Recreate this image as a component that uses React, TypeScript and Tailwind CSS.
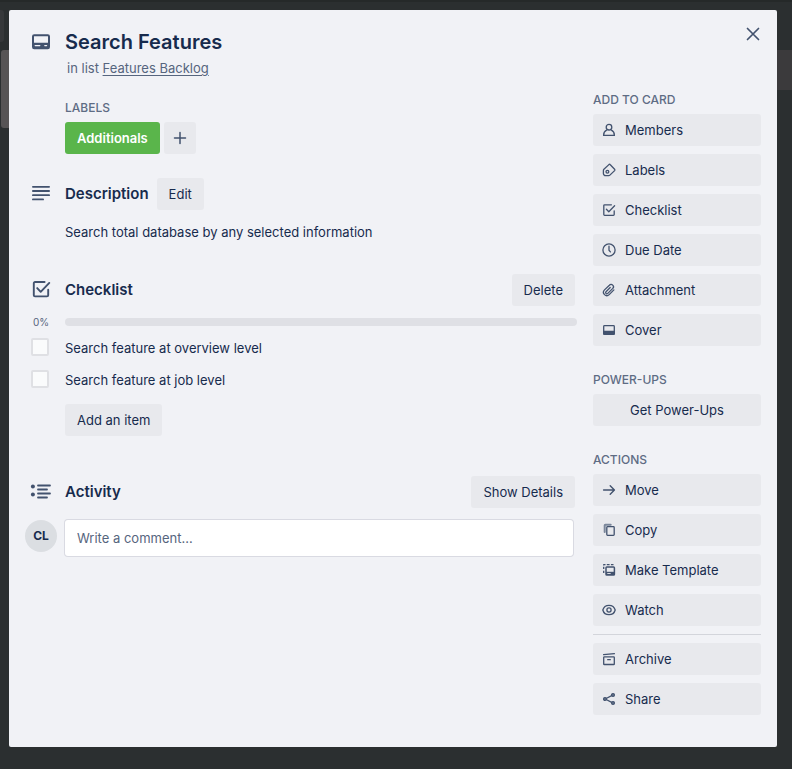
import type { ReactNode } from 'react';

function Icon({ children, small = false }: { children: ReactNode; small?: boolean }) {
  return (
    <svg
      viewBox={small ? '0 0 16 16' : '0 0 24 24'}
      className={small ? 'size-4 shrink-0 text-[#42526e]' : 'size-6 shrink-0 text-[#42526e]'}
      fill="none"
      stroke="currentColor"
      strokeWidth={small ? 1.3 : 2}
      strokeLinecap="round"
      strokeLinejoin="round"
      aria-hidden="true"
    >
      {children}
    </svg>
  );
}

const icons = {
  card: (
    <Icon>
      <rect x="4" y="5.2" width="16" height="13" rx="1.2" strokeWidth="2" />
      <path d="M4 12.700h16v5.300a1 1 0 0 1-1 1H5a1 1 0 0 1-1-1z" fill="currentColor" stroke="none" />
      <path d="M6.200 15.600h4.600M15.800 15.600h1.800" stroke="#f1f2f6" strokeWidth="1.300" />
    </Icon>
  ),
  description: (
    <Icon>
      <path d="M3.900 4.800h16.200M3.900 9h16.200M3.900 13.200h16.200M3.900 17.400h10.200" strokeWidth="1.800" />
    </Icon>
  ),
  checklist: (
    <Icon>
      <path d="M15.600 4H6a1.200 1.200 0 0 0-1.200 1.200v12a1.200 1.200 0 0 0 1.200 1.200h12a1.200 1.200 0 0 0 1.200-1.200v-5.400" strokeWidth="1.900" />
      <path d="m8.200 10.100 3.500 3.700 8.600-8.900" strokeWidth="1.900" />
    </Icon>
  ),
  activity: (
    <Icon>
      <circle cx="3.900" cy="6.500" r="2" fill="currentColor" stroke="none" />
      <circle cx="3.900" cy="14.500" r="2" fill="currentColor" stroke="none" />
      <path d="M9 5.500h12M9 9.500h9M9 13.500h12M9 17.500h9" strokeWidth="1.800" />
    </Icon>
  ),
  member: (
    <Icon small>
      <circle cx="8" cy="5.200" r="2.800" />
      <path d="M5.600 8.200C3.500 9.200 2.600 11 2.600 13.400h10.800c0-2.400-.9-4.200-3-5.200" />
    </Icon>
  ),
  label: (
    <Icon small>
      <path d="M7.900 2.600 2.900 7.300a1.700 1.700 0 0 0-.5 1.200v2.900a2.200 2.200 0 0 0 2.200 2.200h3.100c.5 0 .9-.2 1.200-.5l4.700-4.500a1 1 0 0 0 0-1.400L9.300 2.700a1 1 0 0 0-1.400-.1z" />
      <circle cx="6.400" cy="9.700" r="1.400" />
    </Icon>
  ),
  check: (
    <Icon small>
      <path d="M10.400 2.800H3.600a.8.8 0 0 0-.8.8v8.900c0 .4.4.8.8.8h8.800c.4 0 .8-.4.8-.8V8.800" />
      <path d="m5.400 7.200 2.400 2.500 5.800-6" />
    </Icon>
  ),
  clock: (
    <Icon small>
      <circle cx="8" cy="8" r="6.100" />
      <path d="M8 4.200v4.100l1.400 1.600" />
    </Icon>
  ),
  clip: (
    <Icon small>
      <path d="m12.900 7.900-4.700 4.700a3.300 3.300 0 0 1-4.700-4.700l4.900-4.700a2.300 2.300 0 0 1 3.400 3.200l-5 5a1.200 1.200 0 0 1-1.800-1.700l4.200-4.200" />
    </Icon>
  ),
  cover: (
    <Icon small>
      <rect x="2.700" y="3.700" width="10.600" height="8.600" rx="0.800" />
      <path d="M2.700 9.300h10.600v2.800H2.700z" fill="currentColor" />
    </Icon>
  ),
  move: (
    <Icon small>
      <path d="M2.600 8h10.600M9.200 3.800 13.400 8l-4.200 4.200" strokeWidth="1.400" />
    </Icon>
  ),
  copy: (
    <Icon small>
      <path d="M3.700 10V3.300c0-.3.300-.6.600-.6h5.400" strokeWidth="2" stroke="#7a869a" />
      <rect x="5.800" y="4.600" width="7.400" height="8.800" rx="0.800" fill="#e8e9ed" />
    </Icon>
  ),
  template: (
    <Icon small>
      <path d="M2.700 10.900V8.800M2.700 7V4.800M2.700 3.400v-.7h1.800M5.800 2.700h2.800M9.900 2.700h2.600" strokeLinecap="butt" />
      <rect x="5" y="5" width="8.400" height="8" rx="0.800" strokeWidth="1.500" />
      <path d="M5 9.800h8.400V13H5z" fill="currentColor" stroke="none" />
      <path d="M6.700 11.500h2.600" stroke="#e8e9ed" strokeWidth="0.900" />
    </Icon>
  ),
  watch: (
    <Icon small>
      <path d="M1.800 8c.8-2.900 3.300-4.700 6.200-4.700S13.400 5.100 14.200 8c-.8 2.900-3.300 4.700-6.200 4.700S2.600 10.900 1.800 8z" />
      <circle cx="8" cy="8" r="2.100" />
    </Icon>
  ),
  archive: (
    <Icon small>
      <path d="M2.600 3.700 13.400 2.700" />
      <rect x="2.700" y="5.900" width="10.600" height="7.600" rx="0.600" />
      <path d="M6.700 8.700h2.600" />
    </Icon>
  ),
  share: (
    <Icon small>
      <path d="M11.600 4.200 4.200 8l7.400 3.800" />
      <circle cx="12" cy="4" r="1.400" fill="#7a869a" />
      <circle cx="4" cy="8" r="1.400" fill="#7a869a" />
      <circle cx="12" cy="12" r="1.400" fill="#7a869a" />
    </Icon>
  ),
};

function Button({ children }: { children: ReactNode }) {
  return (
    <button type="button" className="h-8 rounded-[3px] bg-[#e8e9ed] px-3 text-[13px] leading-5">
      {children}
    </button>
  );
}

function SideButton({ icon, label }: { icon: ReactNode; label: string }) {
  return (
    <button type="button" className="flex h-8 w-full items-center gap-2 rounded-[3px] bg-[#e8e9ed] px-2 text-[13px] leading-5">
      {icon}
      {label}
    </button>
  );
}

function SideHeading({ children }: { children: ReactNode }) {
  return <h3 className="mb-1 text-xs leading-5 font-medium text-[#5e6c84] uppercase">{children}</h3>;
}

/* A section title row: icon in the gutter, title, then optional controls. */
function SectionHeader({ icon, title, children }: { icon: ReactNode; title: string; children?: ReactNode }) {
  return (
    <div className="flex h-8 items-center gap-3 pl-1">
      {icon}
      <div className="flex flex-1 items-center">
        <h2 className="text-[15px] leading-5 font-semibold">{title}</h2>
        {children}
      </div>
    </div>
  );
}

const checklistItems = ['Search feature at overview level', 'Search feature at job level'];

export default function App() {
  return (
    <div className="relative isolate min-h-screen bg-[#2b2f30] pt-[10px] pr-[15px] pb-[22px] pl-[9px] font-['Inter','Liberation_Sans',sans-serif] text-[#172b4d]">
      <div className="absolute inset-x-0 top-0 -z-10 h-0.5 bg-[#252929]" />
      <div className="absolute top-[10px] left-0 -z-10 h-8 w-1 rounded-r-[3px] bg-[#36383a]" />
      <div className="absolute top-[50px] left-px -z-10 h-[78px] w-6 rounded-[3px] bg-[#575455]" />
      <div className="absolute top-[50px] right-0 -z-10 h-10 w-6 bg-[#3b3a3c]" />

      <div role="dialog" aria-label="Search Features" className="rounded-xs bg-[#f1f2f6] px-4 pb-8">
        <header className="flex gap-3 pl-1">
          <div className="flex h-16 items-center">{icons.card}</div>
          <div className="flex-1 pt-5">
            <h1 className="text-xl leading-6 font-semibold">Search Features</h1>
            <p className="mt-1 pl-0.5 text-[13px] leading-5 text-[#56657e]">
              in list <a href="#list" className="underline underline-offset-2">Features Backlog</a>
            </p>
          </div>
          <button type="button" aria-label="Close" className="-mr-1 flex size-12 items-center justify-end">
            <Icon><path d="m6.500 6.500 11 11M17.500 6.500l-11 11" strokeWidth="1.700" /></Icon>
          </button>
        </header>

        <div className="flex items-start gap-4">
          <main className="min-w-0 flex-1 pt-5">
            <section className="pl-10">
              <h3 className="mb-1 text-xs leading-5 font-medium text-[#5e6c84] uppercase">Labels</h3>
              <div className="flex gap-1">
                <button type="button" className="h-8 rounded-[3px] bg-[#5ab54b] px-3 text-[13px] leading-5 font-semibold text-white">
                  Additionals
                </button>
                <button type="button" aria-label="Add label" className="flex size-8 items-center justify-center rounded-[3px] bg-[#e8e9ed]">
                  <Icon small><path d="M8 2.500v11M2.500 8h11" strokeWidth="1.500" /></Icon>
                </button>
              </div>
            </section>

            <section className="mt-6">
              <SectionHeader icon={icons.description} title="Description">
                <div className="ml-2"><Button>Edit</Button></div>
              </SectionHeader>
              <p className="mt-3 pl-10 text-[13px] leading-5">Search total database by any selected information</p>
            </section>

            <section className="mt-8">
              <SectionHeader icon={icons.checklist} title="Checklist">
                <div className="mr-0.5 ml-auto"><Button>Delete</Button></div>
              </SectionHeader>
              <div className="mt-2 flex h-4 items-center">
                <span className="w-10 pl-2 text-[10px] leading-4 text-[#56657e]">0%</span>
                <div role="progressbar" aria-label="Checklist progress" aria-valuenow={0} className="h-2 flex-1 rounded-full bg-[#dfe0e5]" />
              </div>
              <ul className="mt-0.5">
                {checklistItems.map((item) => (
                  <li key={item}>
                    <label className="flex h-8 items-center text-[13px] leading-5">
                      <span className="flex w-10 pb-0.5 pl-1.5">
                        <input type="checkbox" className="size-[18px] appearance-none rounded-xs border-2 border-[#dfe0e4] bg-[#fafbfc] checked:bg-[#0079bf]" />
                      </span>
                      {item}
                    </label>
                  </li>
                ))}
              </ul>
              <div className="mt-2 pl-10"><Button>Add an item</Button></div>
            </section>

            <section className="mt-10">
              <SectionHeader icon={icons.activity} title="Activity">
                <div className="mr-0.5 ml-auto"><Button>Show Details</Button></div>
              </SectionHeader>
              <div className="mt-3 flex items-start gap-2 pr-1">
                <span className="flex size-8 shrink-0 items-center justify-center rounded-full bg-[#dbdee2] text-xs font-bold">CL</span>
                <input
                  type="text"
                  aria-label="Write a comment"
                  placeholder="Write a comment…"
                  className="h-9 min-w-0 flex-1 rounded-[3px] bg-white px-3 text-[13px] leading-5 shadow-[0_0_0_1px_#d9dae2] outline-none placeholder:text-[#56657e]"
                />
              </div>
            </section>
          </main>

          <aside className="w-[168px] shrink-0 pt-3">
            <section>
              <SideHeading>Add to card</SideHeading>
              <div className="flex flex-col gap-2">
                <SideButton icon={icons.member} label="Members" />
                <SideButton icon={icons.label} label="Labels" />
                <SideButton icon={icons.check} label="Checklist" />
                <SideButton icon={icons.clock} label="Due Date" />
                <SideButton icon={icons.clip} label="Attachment" />
                <SideButton icon={icons.cover} label="Cover" />
              </div>
            </section>
            <section className="mt-6">
              <SideHeading>Power-Ups</SideHeading>
              <button type="button" className="h-8 w-full rounded-[3px] bg-[#e8e9ed] text-[13px] leading-5">Get Power-Ups</button>
            </section>
            <section className="mt-6">
              <SideHeading>Actions</SideHeading>
              <div className="flex flex-col gap-2">
                <SideButton icon={icons.move} label="Move" />
                <SideButton icon={icons.copy} label="Copy" />
                <SideButton icon={icons.template} label="Make Template" />
                <SideButton icon={icons.watch} label="Watch" />
                <hr className="border-[#d3d5db]" />
                <SideButton icon={icons.archive} label="Archive" />
                <SideButton icon={icons.share} label="Share" />
              </div>
            </section>
          </aside>
        </div>
      </div>
    </div>
  );
}
